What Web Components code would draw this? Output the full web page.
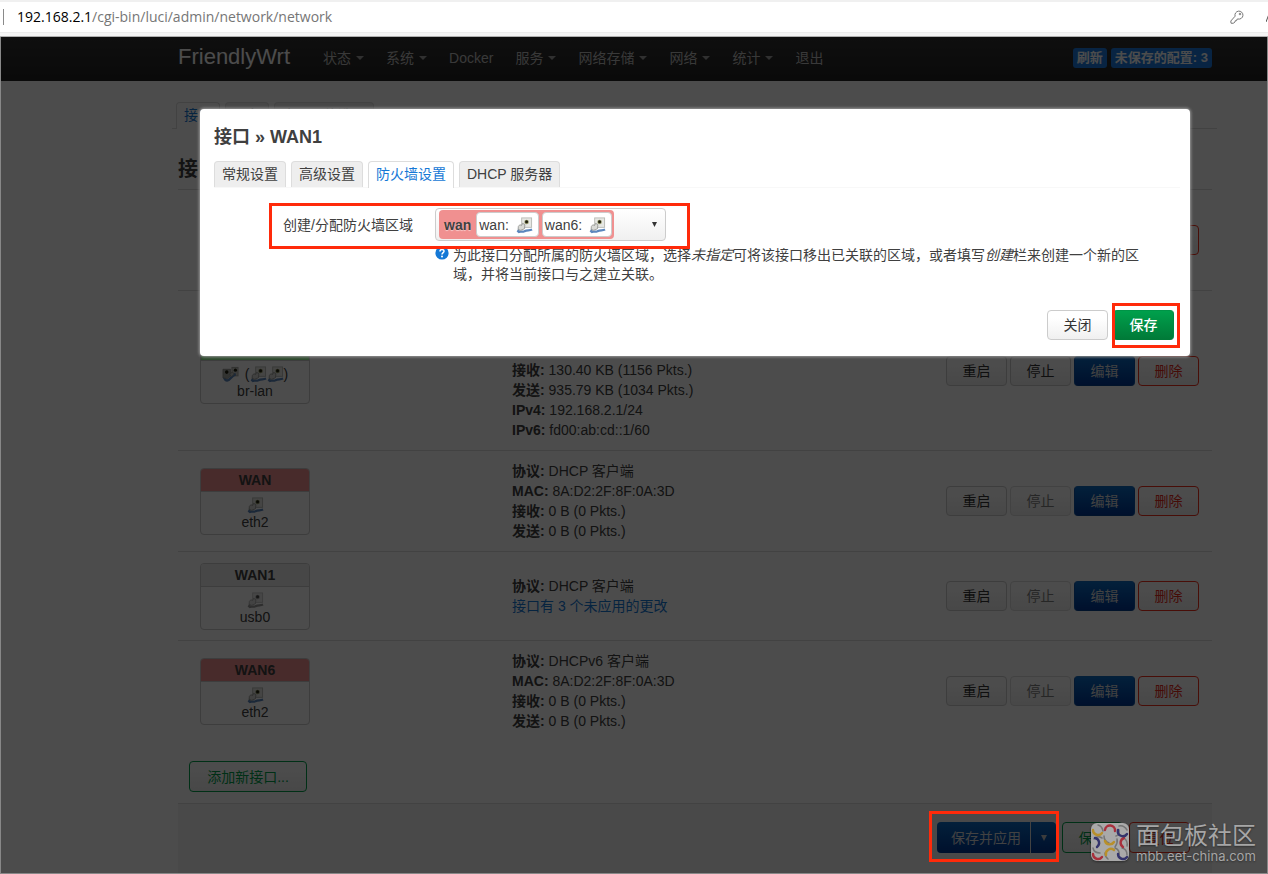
<!DOCTYPE html>
<html lang="zh-CN">
<head>
<meta charset="utf-8">
<title>FriendlyWrt - 接口</title>
<style>
  body {
    margin: 0;
    background: #fff;
    color: #404040;
    font: 14px/20px "Liberation Sans", "Noto Sans CJK SC", sans-serif;
  }
</style>
</head>
<body>
<luci-app></luci-app>

<script>
const define = (name, html, setup) => {
  const template = document.createElement('template');
  template.innerHTML = html;
  customElements.define(name, class extends HTMLElement {
    constructor() {
      super();
      this.attachShadow({ mode: 'open' }).append(template.content.cloneNode(true));
    }
    connectedCallback() {
      if (setup) setup(this, this.shadowRoot);
    }
  });
};

/* Browser address bar */
define('address-bar', `
<style>
  :host { display: block; background: #f5f5f5; border-top: 2px solid #f0f0f0; border-bottom: 1px solid #b0b0b0; box-sizing: border-box; height: 37px; }
  .bar { display: flex; align-items: center; height: 30px; background: #fff; border-bottom: 1px solid #ececec; overflow: hidden; }
  .sep { width: 1px; height: 16px; margin: 0 13px 0 3px; background: #8a8a8a; }
  .url { flex: 1; font: 14px/20px "Open Sans", sans-serif; color: #767676; }
  .url b { font-weight: 400; color: #000; }
  .key { margin-right: 22px; }
  .next { width: 2px; }
  svg { display: block; }
</style>
<div class="bar">
  <span class="sep"></span>
  <span class="url"><b>192.168.2.1</b>/cgi-bin/luci/admin/network/network</span>
  <svg class="key" width="14" height="14" viewBox="0 0 14 14" fill="none" stroke="#777" stroke-width="1"><path d="M5.1 6.2A4 4 0 1 1 8 9L6.9 9.3 6.6 10.6 5.3 10.7 5 12 3.2 13.3 1 13.2.8 11Z" stroke-linejoin="round"/><circle cx="10" cy="4" r=".8"/></svg>
  <svg class="next" width="2" height="14" viewBox="0 0 2 14" stroke="#555"><path d="M0 12 3 4"/></svg>
</div>`);

/* Top navigation entry; the "menu" attribute adds a caret */
define('nav-item', `
<style>
  :host { display: block; }
  a { display: flex; align-items: center; gap: 5px; padding: 0 11px; color: #bfbfbf; text-decoration: none; line-height: 20px; }
  i { display: none; width: 0; border: 4px solid transparent; border-top-color: #a0a0a0; border-bottom: 0; }
  :host([menu]) i { display: block; }
</style>
<a href="#"><slot></slot><i></i></a>`);

define('app-header', `
<style>
  :host { display: flex; align-items: center; height: 44px; padding: 0 56px 0 178px; background: linear-gradient(#333, #222); }
  .brand { margin: 0 22px 4px 0; font-size: 22px; line-height: 30px; color: #fff; text-decoration: none; }
  nav { display: flex; flex: 1; }
  nav, .state { margin-bottom: 2px; }
  .state { display: flex; gap: 4px; }
  .state a { padding: 0 4px; border-radius: 3px; background: #1b7be0; color: #fff; font-size: 13px; font-weight: 700; text-decoration: none; }
</style>
<a class="brand" href="#">FriendlyWrt</a>
<nav>
  <nav-item menu>状态</nav-item><nav-item menu>系统</nav-item><nav-item>Docker</nav-item>
  <nav-item menu>服务</nav-item><nav-item menu>网络存储</nav-item><nav-item menu>网络</nav-item>
  <nav-item menu>统计</nav-item><nav-item>退出</nav-item>
</nav>
<div class="state"><a href="#">刷新</a><a href="#">未保存的配置: 3</a></div>`);

/* Row of tabs sharing one bottom line */
define('tab-strip', `
<style>
  :host { display: flex; gap: 5px; border-bottom: 1px solid var(--line, #ddd); }
</style>
<slot></slot>`);

define('tab-item', `
<style>
  :host { display: block; }
  a { display: block; box-sizing: border-box; height: 26px; padding: 2px 7px; border: 1px solid #ddd; border-bottom: 0; border-radius: 4px 4px 0 0; background: #eee; color: #404040; text-decoration: none; }
  :host([active]) a { margin-bottom: -1px; height: 27px; background: #fff; color: #1578d6; }
</style>
<a href="#"><slot></slot></a>`);

/* Push button with the theme's colour variants */
define('action-button', `
<style>
  :host { display: block; }
  button {
    box-sizing: border-box; width: 100%; height: 100%; min-width: 61px; min-height: 30px; padding: 0 15px;
    border: 1px solid #ccc; border-radius: 4px; background: linear-gradient(#fff 25%, #f0f0f0);
    color: #333; font: inherit; line-height: 20px; white-space: nowrap;
  }
  :host([kind=off]) button { border-color: #ddd; color: #808080; }
  :host([kind=edit]) button { border-color: #1268bc #0a50a4 #05408c; background: linear-gradient(#0b6cc4, #003694); color: #dcdcdc; }
  :host([kind=remove]) button { border-color: #f0301c; color: #e82a18; }
  :host([kind=add]) button { border-color: #00a04c; color: #00a04c; }
  :host([kind=save]) button { border-color: #009447 #008a41 #007a38; background: linear-gradient(#00a04c, #007a38); color: #fff; font-weight: 500; }
</style>
<button type="button"><slot></slot></button>`);

/* Network port pictogram: socket, plug and cable */
define('port-icon', `
<style>
  :host { display: block; width: 17px; height: 18px; }
  :host([off]) { filter: grayscale(1); opacity: .8; }
  :host([bridge]) .one, .two { display: none; }
  :host([bridge]) .two { display: block; }
  svg { display: block; width: 17px; height: 18px; }
</style>
<svg class="one" viewBox="0 0 18 18">
  <rect x="5.5" y="1" width="11.5" height="11" fill="#b9bbb6"/>
  <rect x="6.5" y="2" width="9.5" height="9" fill="#e6e7e3"/>
  <circle cx="11.2" cy="5.8" r="2.4" fill="#9a9d70"/>
  <circle cx="11.2" cy="5.6" r="1.6" fill="#202010"/>
  <path d="M2 17C4 15 6 17 9 15.6 12 14 14 15.2 17 13.8" fill="none" stroke="#5b86bd" stroke-width="2.4"/>
  <path d="M1.5 16.5 4 12.5" stroke="#5b86bd" stroke-width="2"/>
  <path d="M2.5 10.5 4 8.8 6 9.4 7 7.2 9.4 8.6 9 13 5 14.6 2.2 13.8Z" fill="#d9dad6" stroke="#8b8d89" stroke-width=".8"/>
</svg>
<svg class="two" viewBox="0 0 18 18">
  <rect x="10" y="1.5" width="7.5" height="10" fill="#a4a6a1"/>
  <rect x="11" y="2.5" width="5.5" height="8" fill="#c8c9c4"/>
  <path d="M2 12C4 18 7 16 9 13.5S12 10 14.5 9" fill="none" stroke="#5b86bd" stroke-width="2.6"/>
  <path d="M1 4H9V11L6 14 1 13Z" fill="#a8aaa4" stroke="#8b8d89" stroke-width=".8"/>
  <path d="M8 9 11 7 13 9 10 12Z" fill="#c4c5c0" stroke="#8b8d89" stroke-width=".8"/>
  <circle cx="5" cy="7" r="1.9" fill="#202010"/><circle cx="14.2" cy="5" r="1.7" fill="#202010"/>
</svg>`);

/* Interface card: coloured title, pictograms, device name */
define('iface-card', `
<style>
  :host { display: block; box-sizing: border-box; width: 110px; border: 1px solid #ccc; border-radius: 4px; overflow: hidden; text-align: center; line-height: 17px; }
  header { padding: 3px 0 2px; border-bottom: 1px solid #ccc; background: var(--zone, #eee); font-weight: 700; }
  .icons { display: flex; justify-content: center; align-items: center; padding-top: 4px; }
  .name { padding-bottom: 3px; }
</style>
<header><slot name="title"></slot></header>
<div class="icons"><slot name="icons"></slot></div>
<div class="name"><slot></slot></div>`);

define('iface-table', `
<style>
  :host { display: block; }
  table { width: 100%; border-collapse: separate; border-spacing: 0; }
  td { height: 68px; padding: 10px 0; border-bottom: 1px solid #ddd; vertical-align: middle; }
  tr.first td { height: 80px; }
  tr.tall td { height: 139px; }
  tr.tall td.info { vertical-align: bottom; }
  tr:last-child td { border-bottom: 0; }
  td:first-child { width: 312px; padding-left: 22px; }
  td:last-child { width: 253px; padding-right: 13px; }
  .ops { display: grid; grid-template-columns: repeat(4, 1fr); gap: 3px; }
  .gap { width: 6px; }
  a { color: #1578d6; text-decoration: none; }
</style>
<table><tbody></tbody></table>`, (host, root) => {
  const port = '<port-icon></port-icon>';
  const rows = [
    { name: '', dev: '', zone: '#eee', icons: port, size: 'first', info: [] },
    { name: 'LAN', dev: 'br-lan', zone: '#90f090', size: 'tall', icons: '<port-icon bridge></port-icon><span class="gap"></span>(' + port + port + ')',
      info: ['接收:| 130.40 KB (1156 Pkts.)', '发送:| 935.79 KB (1034 Pkts.)', 'IPv4:| 192.168.2.1/24', 'IPv6:| fd00:ab:cd::1/60'] },
    { name: 'WAN', dev: 'eth2', zone: '#f09090', icons: port, stopped: true,
      info: ['协议:| DHCP 客户端', 'MAC:| 8A:D2:2F:8F:0A:3D', '接收:| 0 B (0 Pkts.)', '发送:| 0 B (0 Pkts.)'] },
    { name: 'WAN1', dev: 'usb0', zone: '#eee', icons: '<port-icon off></port-icon>', stopped: true,
      info: ['协议:| DHCP 客户端'], link: '接口有 3 个未应用的更改' },
    { name: 'WAN6', dev: 'eth2', zone: '#f09090', icons: port, stopped: true,
      info: ['协议:| DHCPv6 客户端', 'MAC:| 8A:D2:2F:8F:0A:3D', '接收:| 0 B (0 Pkts.)', '发送:| 0 B (0 Pkts.)'] }
  ];
  root.querySelector('tbody').innerHTML = rows.map(r => `
    <tr class="${r.size || ''}">
      <td><iface-card style="--zone:${r.zone}"><span slot="title">${r.name}</span><span slot="icons" style="display:flex;line-height:18px">${r.icons}</span>${r.dev}</iface-card></td>
      <td class="info">${r.info.map(t => { const [k, v] = t.split('|'); return `<div><strong>${k}</strong>${v}</div>`; }).join('')}${r.link ? `<a href="#">${r.link}</a>` : ''}</td>
      <td><div class="ops"><action-button>重启</action-button><action-button${r.stopped ? ' kind="off"' : ''}>停止</action-button><action-button kind="edit">编辑</action-button><action-button kind="remove">删除</action-button></div></td>
    </tr>`).join('');
});

/* Primary button joined with a menu toggle */
define('split-button', `
<style>
  :host { display: flex; height: 31px; border-radius: 4px; overflow: hidden; background: linear-gradient(#0b6cc4, #003694); }
  button { display: flex; align-items: center; justify-content: center; padding: 0 9px 0 14px; border: 0; background: none; color: #dcdcdc; font: inherit; }
  .menu { width: 26px; padding: 0; border-left: 1px solid #ddd; }
</style>
<button type="button"><slot></slot></button>
<button type="button" class="menu" aria-label="更多"><svg width="6" height="6" viewBox="0 0 6 6"><path d="M0 0H6L3 6Z" fill="#c8c8c8"/></svg></button>`);

/* Red annotation frame drawn around the slotted control */
define('callout-frame', `
<style>
  :host { display: block; position: relative; }
  i { position: absolute; inset: var(--inset, -7px); border: 3px solid #ff2a0a; pointer-events: none; z-index: 2; }
</style>
<slot></slot><i></i>`);

/* Firewall zone drop-down with its member networks */
define('zone-select', `
<style>
  :host { display: grid; width: 231px; }
  select { grid-area: 1 / 1; appearance: none; box-sizing: border-box; width: 100%; height: 33px; border: 1px solid #ccc; border-radius: 4px; background: linear-gradient(#fff, #f0f0f0); }
  .row { grid-area: 1 / 1; display: flex; align-items: center; justify-content: space-between; padding: 0 9px 0 4px; pointer-events: none; }
  .zone { display: flex; align-items: center; gap: 3px; padding: 2px; border-radius: 4px; background: #f09090; }
  .zone b { padding: 0 2px 0 3px; text-shadow: 0 1px 1px #fff8; }
  .net { display: flex; align-items: center; gap: 7px; height: 23px; padding: 0 5px 0 2px; border: 1px solid #ccc; border-radius: 4px; background: #fff; }
</style>
<select aria-label="创建/分配防火墙区域"><option value="wan"></option></select>
<div class="row">
  <div class="zone"><b>wan</b><span class="net">wan: <port-icon></port-icon></span><span class="net">wan6: <port-icon></port-icon></span></div>
  <svg width="5" height="5" viewBox="0 0 6 6"><path d="M0 0H6L3 6Z" fill="#333"/></svg>
</div>`);

define('edit-dialog', `
<style>
  :host { display: block; margin: 72px 78px 0 200px; padding: 15px 10px 16px 14px; border-radius: 4px; background: #fff; box-shadow: 0 0 3px 1px #999; }
  h4 { margin: 0 0 11px; font-size: 18px; line-height: 26px; }
  tab-strip { --line: #f8f8f8; }
  .field { display: grid; grid-template-columns: 199px 1fr; column-gap: 22px; align-items: center; margin: 20px 0 5px; }
  label { text-align: right; }
  .frame { --inset: -5px 490px -8px 55px; }
  .help { display: flex; gap: 4px; margin: 0 20px 0 221px; line-height: 19px; }
  .help svg { flex: none; }
  .help p { margin: 0; }
  footer { display: flex; justify-content: flex-end; gap: 5px; margin: 26px 6px 0 0; }
  footer callout-frame { --inset: -7px -6px -8px -1px; }
</style>
<h4>接口 » WAN1</h4>
<tab-strip><tab-item>常规设置</tab-item><tab-item>高级设置</tab-item><tab-item active>防火墙设置</tab-item><tab-item>DHCP 服务器</tab-item></tab-strip>
<callout-frame class="frame">
  <div class="field"><label for="zone">创建/分配防火墙区域</label><zone-select id="zone"></zone-select></div>
</callout-frame>
<div class="help">
  <svg width="14" height="14" viewBox="0 0 14 14"><circle cx="7" cy="7" r="6.6" fill="#1578d6"/><path d="M5 5.4C5 2.8 9 2.8 9 5.2 9 6.8 7 6.6 7 8.6" fill="none" stroke="#fff" stroke-width="1.5"/><circle cx="7" cy="10.6" r="1" fill="#fff"/></svg>
  <p>为此接口分配所属的防火墙区域，选择<em>未指定</em>可将该接口移出已关联的区域，或者填写<em>创建</em>栏来创建一个新的区域，并将当前接口与之建立关联。</p>
</div>
<footer><action-button>关闭</action-button><callout-frame><action-button kind="save">保存</action-button></callout-frame></footer>`);

/* Community watermark in the lower right corner */
define('water-mark', `
<style>
  :host { display: flex; align-items: center; gap: 6px; color: #a6a6a6; }
  svg { filter: drop-shadow(0 1px 1px #0006); }
  .zh { margin-bottom: 2px; font: 24px/26px "Noto Sans CJK SC", sans-serif; }
  .en { font: 13px/14px Inter, sans-serif; }
  .text { text-shadow: 0 1px 2px #0006; }
</style>
<svg width="40" height="40" viewBox="0 0 40 40" fill="none" stroke-linecap="round">
  <rect x="1" y="1" width="38" height="38" rx="6" fill="#a9a9a9"/>
  <g stroke="#757575" stroke-width="1.5">
    <path d="M8 3Q12 4 13 9M26 14Q30 13 29 8M29 4Q34 3 37 8M4 17Q7 13 12 16M14 14Q14 19 19 21M27 17Q28 21 25 25M34 16Q38 19 37 24M3 26Q4 31 10 31M15 31Q15 35 18 37M25 26Q30 28 29 33M32 26Q37 27 37 33"/>
  </g>
  <g stroke-width="2.4">
    <path d="M3 8A5 5 0 0 0 12 11M15 19A5 5 0 0 0 24 20M16 33A5 5 0 0 1 24 28" stroke="#b8902c"/>
    <path d="M15 8A5 5 0 0 1 25 9M34 16A5 5 0 0 0 33 25M3 32A5 5 0 0 0 12 35" stroke="#a8303c"/>
    <path d="M28 8A5 5 0 0 0 37 12M5 16A5 5 0 0 1 7 25M28 32A5 5 0 0 0 37 35" stroke="#34346c"/>
  </g>
</svg>
<div class="text"><div class="zh">面包板社区</div><div class="en">mbb.eet-china.com</div></div>`);

define('luci-app', `
<style>
  :host { display: flex; flex-direction: column; min-height: 100vh; }
  .view { position: relative; flex: 1; }
  main { padding: 21px 56px 0 178px; }
  main > tab-strip { margin: 0 -5px 0 -6px; padding-left: 4px; }
  h2 { margin: 25px 0 0; padding-bottom: 5px; border-bottom: 1px solid #ddd; font-size: 20px; line-height: 30px; }
  .add { display: flex; margin: 20px 11px 11px; }
  .add action-button { width: 118px; height: 31px; }
  .actions { display: flex; justify-content: flex-end; gap: 6px; padding: 18px 22px 21px; border-top: 1px solid #ddd; background: #f5f5f5; }
  .shade { position: absolute; inset: 0; background: rgba(0, 0, 0, .7); box-shadow: inset 1px -1px #888, inset -1px 0 #888; }
  .mark { position: absolute; right: 12px; bottom: 11px; }
  .hint { position: absolute; right: 209px; bottom: 12px; width: 130px; height: 51px; box-sizing: border-box; border: 3px solid #ff2a0a; }
</style>
<address-bar></address-bar>
<div class="view">
  <app-header></app-header>
  <main>
    <tab-strip><tab-item active>接口</tab-item><tab-item>设备</tab-item><tab-item>全局网络选项</tab-item></tab-strip>
    <h2>接口</h2>
    <iface-table></iface-table>
    <div class="add"><action-button kind="add">添加新接口...</action-button></div>
    <div class="actions"><split-button>保存并应用</split-button><action-button kind="add">保存</action-button><action-button kind="remove">复位</action-button></div>
  </main>
  <div class="shade">
    <edit-dialog role="dialog" aria-label="接口 » WAN1"></edit-dialog>
    <div class="hint"></div>
    <water-mark class="mark"></water-mark>
  </div>
</div>`);
</script>
</body>
</html>
